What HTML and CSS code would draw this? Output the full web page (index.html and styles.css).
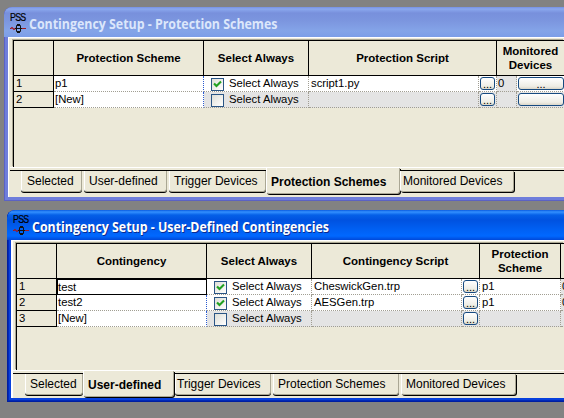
FILE: index.html
```html
<!DOCTYPE html>
<html lang="en">
<head>
<meta charset="utf-8">
<title>Contingency Setup</title>
<link rel="stylesheet" href="styles.css">
</head>
<body>
<svg class="defs" width="0" height="0">
  <symbol id="wave" viewBox="0 0 16 9"><path d="M0 4.5h1l1-1 2 2 2-1.5M11 4.5h5" fill="none" stroke="#a01822" stroke-width="1.2"/><path d="M6.5 1.5h4v6h-4zM5 4.5h7M7 .5h3M7 8.5h3" fill="none" stroke="#111"/></symbol>
  <symbol id="tick" viewBox="0 0 9 9"><path d="M1 3.5l2.5 2.6L8 1.6" fill="none" stroke="#21a121" stroke-width="2.1"/></symbol>
</svg>

<section class="window inactive">
  <header class="titlebar"><span class="logo"><b>PSS</b><svg width="16" height="9"><use href="#wave"/></svg></span><h1>Contingency Setup - Protection Schemes</h1></header>
  <div class="client">
    <div class="sheet">
      <div class="row head schemes">
        <div></div><div>Protection Scheme</div><div>Select Always</div><div class="script-head">Protection Script</div><div class="wide">Monitored<br>Devices</div>
      </div>
      <div class="row schemes">
        <div class="num">1</div><div class="mark">p1</div><div class="check"><i><svg width="9" height="9"><use href="#tick"/></svg></i>Select Always</div><div>script1.py</div><div class="pick"><button>...</button></div><div class="gray">0</div><div class="more"><button>...</button></div>
      </div>
      <div class="row schemes">
        <div class="num">2</div><div class="mark">[New]</div><div class="check gray"><i></i>Select Always</div><div class="gray"></div><div class="pick gray"><button>...</button></div><div class="gray"></div><div class="more gray"><button></button></div>
      </div>
    </div>
    <nav class="tabs">
      <a class="t-selected">Selected</a><a class="t-user">User-defined</a><a class="t-trigger">Trigger Devices</a><a class="t-schemes current">Protection Schemes</a><a class="t-devices">Monitored Devices</a>
    </nav>
  </div>
</section>

<section class="window active">
  <header class="titlebar"><span class="logo"><b>PSS</b><svg width="16" height="9"><use href="#wave"/></svg></span><h1>Contingency Setup - User-Defined Contingencies</h1></header>
  <div class="client">
    <div class="sheet">
      <div class="row head user">
        <div></div><div>Contingency</div><div>Select Always</div><div class="script-head">Contingency Script</div><div>Protection<br>Scheme</div><div></div>
      </div>
      <div class="row user">
        <div class="num">1</div><div class="mark focus">test</div><div class="check"><i><svg width="9" height="9"><use href="#tick"/></svg></i>Select Always</div><div>CheswickGen.trp</div><div class="pick"><button>...</button></div><div>p1</div><div class="gray cut">0</div>
      </div>
      <div class="row user">
        <div class="num">2</div><div class="mark">test2</div><div class="check"><i><svg width="9" height="9"><use href="#tick"/></svg></i>Select Always</div><div>AESGen.trp</div><div class="pick"><button>...</button></div><div>p1</div><div class="gray cut">0</div>
      </div>
      <div class="row user">
        <div class="num">3</div><div class="mark">[New]</div><div class="check gray"><i></i>Select Always</div><div class="gray"></div><div class="pick gray"><button>...</button></div><div class="gray"></div><div class="gray"></div>
      </div>
    </div>
    <nav class="tabs">
      <a class="t-selected">Selected</a><a class="t-user current">User-defined</a><a class="t-trigger">Trigger Devices</a><a class="t-schemes">Protection Schemes</a><a class="t-devices">Monitored Devices</a>
    </nav>
  </div>
</section>
</body>
</html>
```

FILE: styles.css
```css
* { box-sizing: border-box; }
html, body { height: 418px; overflow: hidden; }
body {
  margin: 0;
  padding-top: 7px;
  background: #828282;
  font: 11.3px/15px "Liberation Sans", Arial, sans-serif;
  color: #000;
}
.defs { display: block; }

/* windows */
.window {
  height: 194px;
  margin-left: 4px;
  padding: 0 0 4px 4px;
  border-radius: 8px 0 0 0;
  overflow: hidden;
}
.inactive {
  background: #6f7edb;
  box-shadow: inset 1px -1px 0 #5b62c4;
}
.active {
  height: 192px;
  margin: 9px 0 0 7px;
  background: #0740dc;
  box-shadow: inset 1px -1px 0 #001ea0, inset 2px -2px 0 #0029b8;
}
.titlebar {
  display: flex;
  height: 30px;
  margin-left: -4px;
  border-radius: 8px 0 0 0;
}
.inactive .titlebar { background: linear-gradient(#7690e3 0, #8aa8ee 2px, #7890dc 6px, #7c96df 14px, #84a4e8 24px, #7c9ee8 100%); }
.active .titlebar { background: linear-gradient(#0a5be0 0, #3390ff 2px, #0560e8 5px, #0052e0 10px, #0062f6 21px, #0068ff 26px, #0048d8 100%); }
.logo {
  display: flex;
  flex-direction: column;
  width: 16px;
  margin: 6px 0 0 6px;
}
.active .logo { margin-top: 5px; }
.logo b { height: 10px; font: 10px/10px "Liberation Sans", Arial, sans-serif; letter-spacing: -1px; -webkit-text-stroke: .2px #000; letter-spacing: -.8px; transform: scaleX(.88); transform-origin: 0 0; }
.logo svg { display: block; margin-top: 1px; }
h1 {
  margin: 8px 0 0 3px;
  font: 700 13.5px/18px "Open Sans", "Noto Sans", sans-serif;
  white-space: nowrap;
  transform: scaleX(.917);
  transform-origin: 0 0;
}
.inactive h1 { color: #dce7fb; }
.active h1 { color: #fff; text-shadow: 1px 1px #0a2a90; }
.client {
  height: 160px;
  padding: 2px 0 0 3px;
  background: #ece9d8;
  border-top: 1px solid #fff;
  border-left: 1px solid #fff;
}
.active .client { height: 158px; border-left-width: 2px; padding-left: 2px; }

/* data grid */
.sheet {
  height: 127px;
  margin-left: 1px;
  border: solid #000;
  border-width: 1px 0 0 1px;
  box-shadow: -1px -1px #aaa794;
}
.row { display: grid; height: 16px; background: #fff; }
.row.schemes { grid-template-columns: 40px 150px 105px 170px 18px 20px 60px; }
.row.user { grid-template-columns: 40px 150px 105px 150px 18px 81px 30px; }
.row > div {
  min-width: 0;
  padding-left: 2px;
  border-right: 1px dotted #a19e92;
  border-bottom: 1px dotted #a19e92;
  white-space: nowrap;
}
.row.head { height: 35px; background: #ece9d8; }
.row.head > div {
  display: flex;
  align-items: center;
  justify-content: center;
  padding: 0;
  border: solid #000;
  border-width: 0 1px 1px 0;
  font-weight: 700;
  font-size: 11.5px;
  line-height: 14px;
  text-align: center;
}
.head > .script-head { grid-column: span 2; }
.row.head > .wide { grid-column: span 2; padding-right: 12px; }
.row > .num { background: #ece9d8; border: solid #000; border-width: 0 1px 1px 0; }
.row > .mark { padding-left: 1px; border-right-color: #2a5ad0; }
.row > .focus { border: 1px solid #000; padding-left: 0; line-height: 14px; box-shadow: 0 -1px #000; }
.row > .gray { background: #e4e4e4; }
.row > .gray:not(.check) { padding-left: 1px; }
.row > .check { display: flex; padding-left: 7px; }
.check i {
  flex: none;
  width: 13px;
  height: 13px;
  margin: 2px 5px 0 0;
  padding: 1px;
  border: 1px solid #2a5585;
  background: linear-gradient(135deg, #dedfd8, #fff);
}
.check svg { display: block; }
.row > .pick, .row > .more { display: flex; padding: 1px 0 0 1px; }
button {
  width: 15px;
  height: 13px;
  padding: 0;
  border: 1px solid #164a80;
  border-radius: 3px;
  background: linear-gradient(#fff, #eeede5 75%, #dad6c9);
  font: 11px/10px "Liberation Sans", Arial, sans-serif;
}
.more button { width: 46px; flex: none; }

/* sheet tabs */
.tabs {
  display: flex;
  align-items: flex-start;
  height: 28px;
  margin: 0 0 0 -2px;
  border-top: 1px solid #fff;
  background: linear-gradient(#ece9d8 2px, #000 2px, #000 3px, #ece9d8 3px);
}
.tabs a {
  height: 21px;
  margin: 3px 2px 0 0;
  padding-left: 4px;
  border: solid #aaa794;
  border-width: 0 1px 1px 1px;
  border-left-color: #fff;
  border-radius: 0 0 3px 3px;
  box-shadow: 0 1px #000;
  background: #ece9d8;
  font-size: 12px;
  line-height: 20px;
  white-space: nowrap;
}
.tabs .t-devices { box-shadow: 1px 1px #000; }
.tabs .current {
  height: 26px;
  margin: 0;
  padding-top: 4px;
  font-weight: 700;
  box-shadow: 1px 1px #000;
}
.t-selected { width: 61px; }
.t-user { width: 83px; }
.t-trigger { width: 97px; }
.t-schemes { width: 126px; }
.t-devices { width: 114px; }
.tabs .t-selected { margin-left: 11px; padding-left: 5px; }
.inactive .tabs .t-trigger { margin-right: 0; }
.inactive .t-schemes { width: 134px; }
.inactive .tabs .t-devices { padding-left: 2px; }
.active .tabs .t-selected { width: 58px; margin: 3px 0 0 12px; padding-left: 4px; }
.active .tabs .t-user { width: 91px; margin-right: 1px; }
.active .t-trigger { width: 96px; padding-left: 1px; }
.active .t-devices { width: 115px; }
.active .tabs .t-trigger { padding-left: 1px; }
```
